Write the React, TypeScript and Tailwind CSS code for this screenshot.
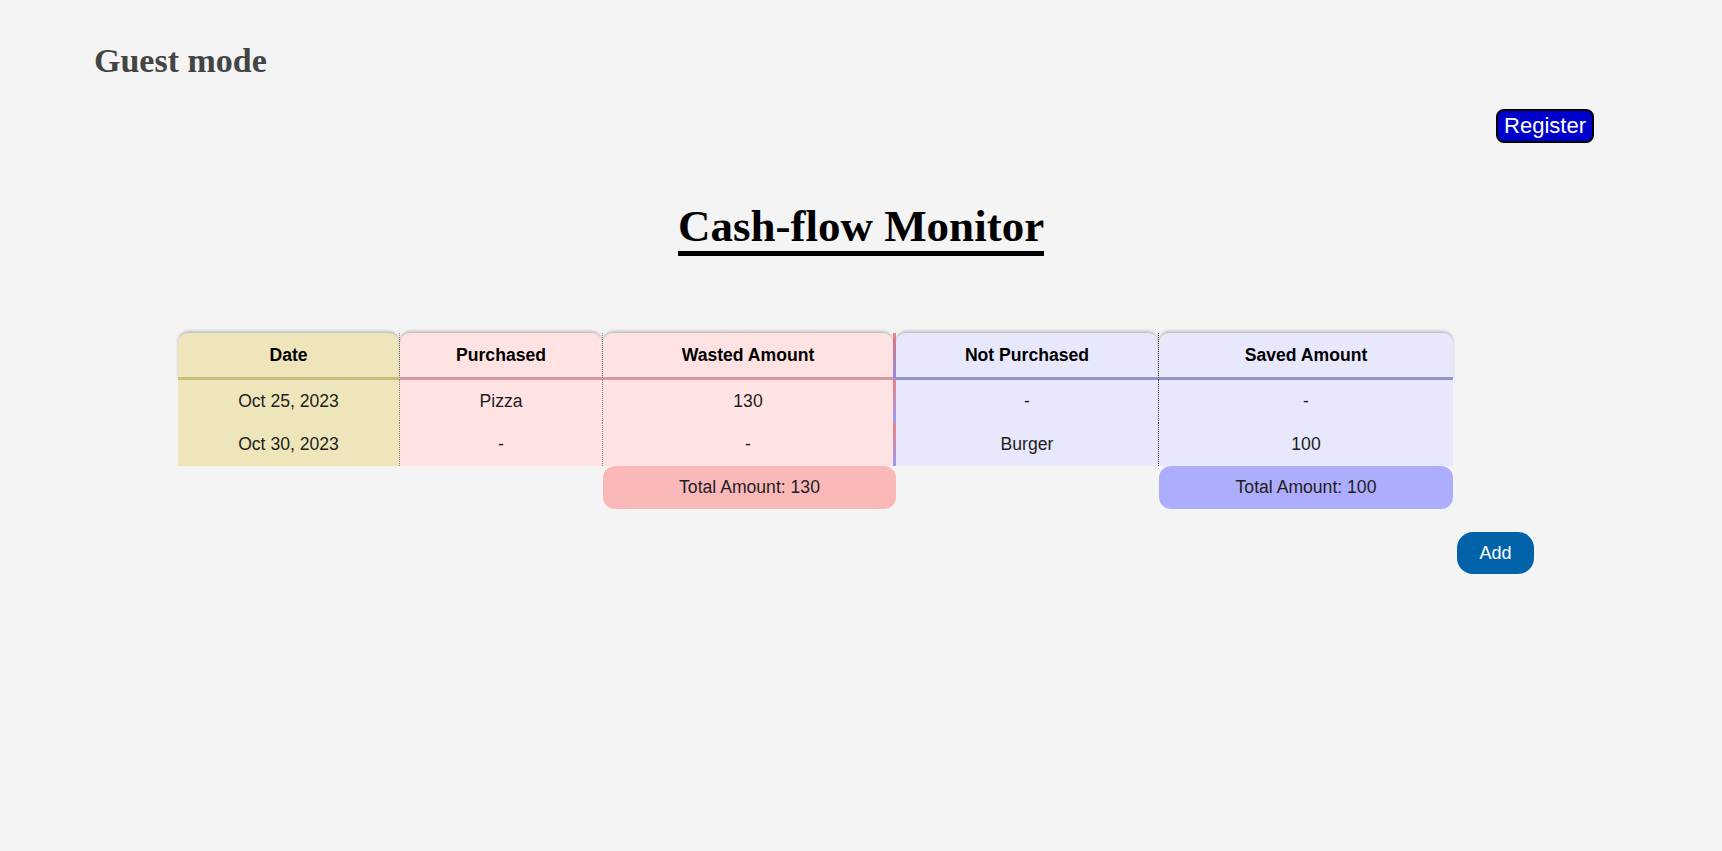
import { ReactNode } from "react";

type Divider = "dotted" | "dottedDark" | "gradient" | "none";

interface Column {
  key: string;
  label: string;
  width: string;
  bg: string;
  headLine: string;
  divider: Divider;
}

const columns: Column[] = [
  { key: "date", label: "Date", width: "w-[222px]", bg: "bg-[#eee6ba]", headLine: "border-b-[#cabd80]", divider: "dotted" },
  { key: "purchased", label: "Purchased", width: "w-[203px]", bg: "bg-[#ffe3e3]", headLine: "border-b-[#d69b9b]", divider: "dotted" },
  { key: "wasted", label: "Wasted Amount", width: "w-[293px]", bg: "bg-[#ffe3e3]", headLine: "border-b-[#d69b9b]", divider: "gradient" },
  { key: "notPurchased", label: "Not Purchased", width: "w-[263px]", bg: "bg-[#e8e8fc]", headLine: "border-b-[#9494cc]", divider: "dottedDark" },
  { key: "saved", label: "Saved Amount", width: "w-[294px]", bg: "bg-[#e8e8fc]", headLine: "border-b-[#9494cc]", divider: "none" },
];

const rows: Record<string, string>[] = [
  { date: "Oct 25, 2023", purchased: "Pizza", wasted: "130", notPurchased: "-", saved: "-" },
  { date: "Oct 30, 2023", purchased: "-", wasted: "-", notPurchased: "Burger", saved: "100" },
];

const dividerClass: Record<Divider, string> = {
  dotted: "[border-right:1px_dotted_#8a8a8a]",
  dottedDark: "[border-right:1px_dotted_#333]",
  gradient: "border-r-[3px] [border-image:linear-gradient(#f08080,#9a9af6)_1]",
  none: "",
};

function HeaderCell({ col }: { col: Column }) {
  return (
    <div className={`${col.width} h-[47px] ${dividerClass[col.divider]}`}>
      <div
        className={`flex h-full items-center justify-center rounded-t-[10px] border-b-[3px] ${col.headLine} ${col.bg} font-bold text-black shadow-[0_-2px_3px_rgba(0,0,0,0.22)]`}
      >
        {col.label}
      </div>
    </div>
  );
}

function BodyCell({ col, children }: { col: Column; children: ReactNode }) {
  return (
    <div
      className={`${col.width} flex h-[43px] items-center justify-center ${col.bg} ${dividerClass[col.divider]} text-[#1e1e1e]`}
    >
      {children}
    </div>
  );
}

function TotalCell({ col }: { col: Column }) {
  if (col.key === "wasted") {
    return (
      <div className={`${col.width} flex h-[43px] items-center justify-center rounded-[12px] bg-[#fab8b8] text-[#1e1e1e]`}>
        Total Amount: 130
      </div>
    );
  }
  if (col.key === "saved") {
    return (
      <div className={`${col.width} flex h-[43px] items-center justify-center rounded-[12px] bg-[#adadfd] text-[#1e1e1e]`}>
        Total Amount: 100
      </div>
    );
  }
  return <div className={col.width} />;
}

export default function App() {
  return (
    <div className="min-h-[851px] bg-[#f4f4f4] font-['Liberation_Sans',Arial,sans-serif] text-[17.6px]">
      <header className="pl-[94px] pt-[42px]">
        <h2 className="font-['Liberation_Serif','Times_New_Roman',serif] text-[34px] font-bold leading-[38px] text-[#444]">
          Guest mode
        </h2>
      </header>

      <div className="mt-[29px] flex justify-end pr-[128px]">
        <button className="flex h-[34px] items-center rounded-[8px] border-2 border-black bg-[#0000cc] px-[6px] text-[22px] leading-none text-white">
          Register
        </button>
      </div>

      <div className="mt-[58px] flex justify-center">
        <h1 className="inline-block border-b-[5px] border-black font-['Liberation_Serif','Times_New_Roman',serif] text-[45px] font-bold leading-[50px] text-black">
          Cash-flow Monitor
        </h1>
      </div>

      <section className="ml-[178px] mt-[77px] w-[1356px]">
        <div className="flex">
          {columns.map((col) => (
            <HeaderCell key={col.key} col={col} />
          ))}
        </div>
        {rows.map((row, i) => (
          <div key={i} className="flex">
            {columns.map((col) => (
              <BodyCell key={col.key} col={col}>
                {row[col.key]}
              </BodyCell>
            ))}
          </div>
        ))}
        <div className="flex">
          {columns.map((col) => (
            <TotalCell key={col.key} col={col} />
          ))}
        </div>

        <div className="mt-[23px] flex justify-end">
          <button className="flex h-[42px] w-[77px] items-center justify-center rounded-[16px] bg-[#0063a9] text-[18px] text-white">
            Add
          </button>
        </div>
      </section>
    </div>
  );
}
